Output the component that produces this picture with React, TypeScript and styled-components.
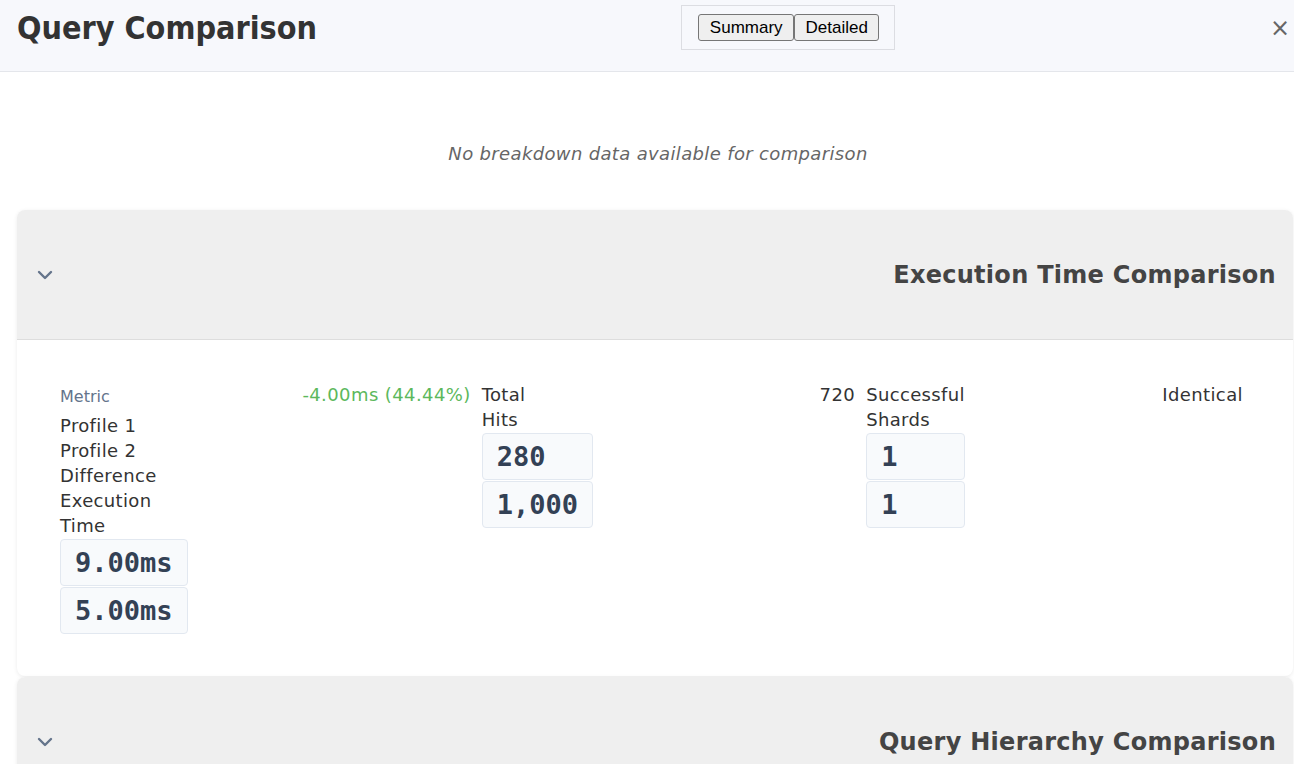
import React from "react";
import styled, { createGlobalStyle } from "styled-components";
import { ChevronDown } from "lucide-react";

const GlobalStyle = createGlobalStyle`
  html, body {
    margin: 0;
    padding: 0;
    background: #ffffff;
  }
  body {
    font-family: "DejaVu Sans", Verdana, sans-serif;
    color: #333333;
    overflow: hidden;
  }
  * { box-sizing: border-box; }
`;

const Page = styled.div`
  display: flex;
  flex-direction: column;
  min-height: 764px;
`;

const Header = styled.header`
  display: flex;
  justify-content: space-between;
  align-items: flex-start;
  padding: 5px 0 20px 17px;
  background: #f7f8fc;
  border-bottom: 1px solid #e4e6eb;
`;

const Title = styled.h1`
  margin: 0;
  font-family: "DejaVu Sans Condensed", "DejaVu Sans", sans-serif;
  font-stretch: condensed;
  font-size: 32px;
  line-height: 46px;
  font-weight: 700;
  color: #333333;
`;

const ViewToggle = styled.div`
  display: flex;
  margin-right: 6px;
  padding: 8px 15px 8px 16px;
  border: 1px solid #dcdde2;
`;

const ToggleButton = styled.button`
  font-family: "Liberation Sans", Arial, sans-serif;
  font-size: 17px;
  line-height: 21px;
  padding: 2px 10.5px;
  color: #000000;
  background: #efefef;
  border: 1px solid #767676;
  border-radius: 3px;
  cursor: pointer;
`;

const CloseButton = styled.button`
  font-family: "DejaVu Sans", sans-serif;
  font-size: 24px;
  line-height: 46px;
  padding: 0 4px;
  color: #666666;
  background: none;
  border: none;
  cursor: pointer;
`;

const Content = styled.main`
  display: flex;
  flex-direction: column;
  gap: 1px;
  padding: 0 1px 0 17px;
`;

const EmptyMessage = styled.p`
  margin: 0;
  padding: 68px 0 42px 6px;
  text-align: center;
  font-style: italic;
  font-size: 18px;
  letter-spacing: 0.35px;
  line-height: 27px;
  color: #666666;
`;

const Card = styled.section`
  background: #ffffff;
  border-radius: 8px;
  box-shadow: 0 1px 4px rgba(0, 0, 0, 0.08);
  overflow: hidden;
`;

const CardHeader = styled.div`
  display: flex;
  justify-content: space-between;
  align-items: center;
  min-height: 130px;
  padding: 0 17px 0 16px;
  background: #efefef;
  border-bottom: 1px solid #dddddd;
  color: #64748b;
`;

const CardTitle = styled.h2`
  margin: 0;
  font-size: 24px;
  letter-spacing: 0.28px;
  line-height: 30px;
  font-weight: 700;
  color: #444444;
`;

const CardBody = styled.div`
  padding: 42px 50px 42px 43px;
`;

const MetricsGrid = styled.div`
  display: grid;
  grid-template-columns: min-content 273fr min-content 252fr min-content 268fr;
  column-gap: 11px;
  align-items: start;
`;

const MetricCell = styled.div`
  display: flex;
  flex-direction: column;
`;

const HeadLabel = styled.div`
  font-size: 16px;
  line-height: 24px;
  padding: 3px 0 4px;
  color: #64748b;
`;

const Label = styled.div`
  font-size: 18px;
  letter-spacing: 0.35px;
  line-height: 25px;
  color: #333333;
`;

const RowLabel = styled(Label)`
  width: min-content;
`;

const ValueBox = styled.div`
  margin: 1px 0 0;
  padding: 6px 14px;
  font-family: "DejaVu Sans Mono", monospace;
  font-weight: 700;
  font-size: 27px;
  line-height: 33px;
  white-space: nowrap;
  color: #334155;
  background: #f8fafc;
  border: 1px solid #e2e8f0;
  border-radius: 4px;
`;

const DiffCell = styled.div<{ $tone: "better" | "worse" | "neutral" }>`
  text-align: right;
  font-size: 18px;
  letter-spacing: 0.4px;
  line-height: 25px;
  color: ${(p) => (p.$tone === "better" ? "#5cb85c" : "#333333")};
`;

type Row = {
  label: string;
  p1: string;
  p2: string;
  diff: string;
  tone: "better" | "worse" | "neutral";
};

const rows: Row[] = [
  { label: "Execution Time", p1: "9.00ms", p2: "5.00ms", diff: "-4.00ms (44.44%)", tone: "better" },
  { label: "Total Hits", p1: "280", p2: "1,000", diff: "720", tone: "worse" },
  { label: "Successful Shards", p1: "1", p2: "1", diff: "Identical", tone: "neutral" },
];

export default function App() {
  return (
    <Page>
      <GlobalStyle />
      <Header>
        <Title>Query Comparison</Title>
        <ViewToggle>
          <ToggleButton>Summary</ToggleButton>
          <ToggleButton>Detailed</ToggleButton>
        </ViewToggle>
        <CloseButton aria-label="Close">×</CloseButton>
      </Header>
      <Content>
        <EmptyMessage>No breakdown data available for comparison</EmptyMessage>
        <Card>
          <CardHeader>
            <ChevronDown size={24} strokeWidth={2.4} />
            <CardTitle>Execution Time Comparison</CardTitle>
          </CardHeader>
          <CardBody>
            <MetricsGrid>
              {rows.map((r, i) => (
                <React.Fragment key={r.label}>
                  <MetricCell>
                    {i === 0 && (
                      <>
                        <HeadLabel>Metric</HeadLabel>
                        <Label>Profile 1</Label>
                        <Label>Profile 2</Label>
                        <Label>Difference</Label>
                      </>
                    )}
                    <RowLabel>{r.label}</RowLabel>
                    <ValueBox>{r.p1}</ValueBox>
                    <ValueBox>{r.p2}</ValueBox>
                  </MetricCell>
                  <DiffCell $tone={r.tone}>{r.diff}</DiffCell>
                </React.Fragment>
              ))}
            </MetricsGrid>
          </CardBody>
        </Card>
        <Card>
          <CardHeader>
            <ChevronDown size={24} strokeWidth={2.4} />
            <CardTitle>Query Hierarchy Comparison</CardTitle>
          </CardHeader>
          <CardBody />
        </Card>
      </Content>
    </Page>
  );
}
